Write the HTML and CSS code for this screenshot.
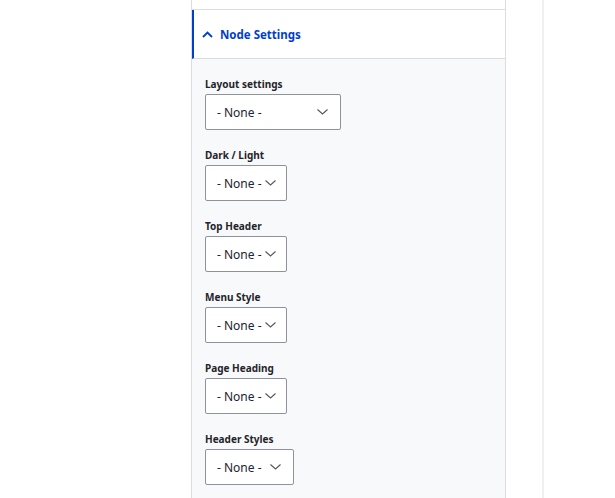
FILE: index.html
```html
<!DOCTYPE html>
<html>
<head>
<meta charset="utf-8">
<link rel="stylesheet" href="styles.css">
</head>
<body>
<div class="page">
  <div class="gutter"></div>
  <div class="panel">
    <div class="panel-top"></div>
    <div class="summary">
      <svg class="chev-up" width="11" height="7" viewBox="0 0 11 7"><path d="M1 6 L5.5 1.5 L10 6" fill="none" stroke="#003ecc" stroke-width="1.8"/></svg>
      <span class="summary-title">Node Settings</span>
    </div>
    <div class="panel-body">
      <div class="field">
        <label class="field-label">Layout settings</label>
        <div class="select select-wide"><span>- None -</span><svg class="chev" width="11" height="6" viewBox="0 0 11 6"><path d="M0.5 0.5 L5.5 5 L10.5 0.5" fill="none" stroke="#545560" stroke-width="1.1"/></svg></div>
      </div>
      <div class="field">
        <label class="field-label">Dark / Light</label>
        <div class="select"><span>- None -</span><svg class="chev" width="11" height="6" viewBox="0 0 11 6"><path d="M0.5 0.5 L5.5 5 L10.5 0.5" fill="none" stroke="#545560" stroke-width="1.1"/></svg></div>
      </div>
      <div class="field">
        <label class="field-label">Top Header</label>
        <div class="select"><span>- None -</span><svg class="chev" width="11" height="6" viewBox="0 0 11 6"><path d="M0.5 0.5 L5.5 5 L10.5 0.5" fill="none" stroke="#545560" stroke-width="1.1"/></svg></div>
      </div>
      <div class="field">
        <label class="field-label">Menu Style</label>
        <div class="select"><span>- None -</span><svg class="chev" width="11" height="6" viewBox="0 0 11 6"><path d="M0.5 0.5 L5.5 5 L10.5 0.5" fill="none" stroke="#545560" stroke-width="1.1"/></svg></div>
      </div>
      <div class="field">
        <label class="field-label">Page Heading</label>
        <div class="select"><span>- None -</span><svg class="chev" width="11" height="6" viewBox="0 0 11 6"><path d="M0.5 0.5 L5.5 5 L10.5 0.5" fill="none" stroke="#545560" stroke-width="1.1"/></svg></div>
      </div>
      <div class="field">
        <label class="field-label">Header Styles</label>
        <div class="select select-mid"><span>- None -</span><svg class="chev" width="11" height="6" viewBox="0 0 11 6"><path d="M0.5 0.5 L5.5 5 L10.5 0.5" fill="none" stroke="#545560" stroke-width="1.1"/></svg></div>
      </div>
    </div>
  </div>
  <div class="spacer"></div>
  <div class="divider"></div>
</div>
</body>
</html>
```

FILE: styles.css
```css
html, body {
  margin: 0;
  padding: 0;
  background: #ffffff;
  height: 100%;
  overflow: hidden;
}
body {
  font-family: "Noto Sans", "Open Sans", sans-serif;
  color: #222330;
}
.page {
  display: flex;
  height: 498px;
}
.gutter {
  width: 191px;
  flex: none;
}
.panel {
  width: 313px;
  flex: none;
  border-left: 1px solid #dcdde2;
  border-right: 1px solid #dcdde2;
  display: flex;
  flex-direction: column;
}
.panel-top {
  height: 9px;
  border-bottom: 1px solid #dcdde2;
  background: #fff;
}
.summary {
  height: 48px;
  border-left: 2px solid #003ecc;
  border-bottom: 1px solid #dcdde2;
  display: flex;
  align-items: center;
  padding-left: 8px;
  gap: 7px;
  background: #fff;
}
.chev-up { display: block; }
.summary-title {
  color: #003ecc;
  font-weight: 700;
  font-size: 11.5px;
}
.panel-body {
  flex: 1;
  background: #f8f9fb;
  padding: 17px 12px 0 13px;
  display: flex;
  flex-direction: column;
  gap: 17px;
}
.field {
  display: flex;
  flex-direction: column;
  align-items: flex-start;
  gap: 2px;
}
.field-label {
  font-size: 10px;
  font-weight: 700;
  line-height: 16px;
  color: #232429;
}
.select {
  box-sizing: border-box;
  height: 36px;
  width: 82px;
  border: 1px solid #8e929c;
  border-radius: 2px;
  background: #fff;
  display: flex;
  align-items: center;
  padding-left: 11px;
  font-size: 12px;
  color: #222330;
}
.select span { white-space: nowrap; }
.select .chev { margin-left: 3px; flex: none; }
.select-wide { width: 136px; }
.select-wide .chev { margin-left: auto; margin-right: 12px; }
.select-mid { width: 89px; }
.select-mid .chev { margin-left: auto; margin-right: 12px; }
.spacer { width: 36px; flex: none; }
.divider {
  width: 2px;
  flex: none;
  background: #f0f0f2;
}
```
